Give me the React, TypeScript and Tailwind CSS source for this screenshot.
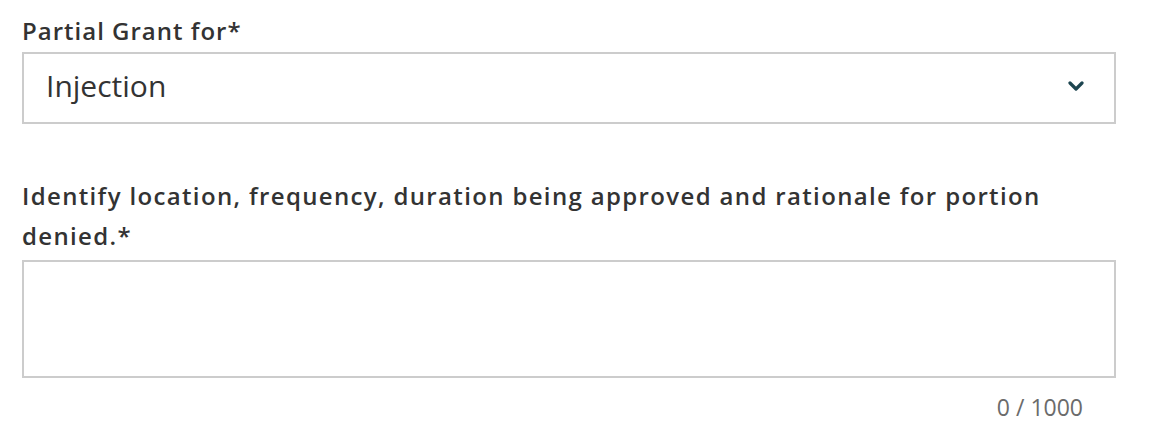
export default function App() {
  return (
    <div className="min-h-screen bg-white font-['Open_Sans','Liberation_Sans',sans-serif] text-[#333333]">
      <div className="pl-[22px] w-[1116px]">
        {/* Partial grant select */}
        <div className="mt-[11px] h-[40px] leading-[40px] text-[24px] tracking-[1px] font-semibold text-[#333333]">
          Partial Grant for*
        </div>
        <div className="mt-[1px] h-[72px] border-2 border-[#cccccc] flex items-center justify-between pl-[22px] pr-[30px] pb-[5px]">
          <span className="text-[30px] text-[#333333]">Injection</span>
          <svg width="16" height="10" viewBox="0 0 16 10" fill="none">
            <path d="M2 2l6 6 6-6" stroke="#1d4550" strokeWidth="3.2" strokeLinecap="round" strokeLinejoin="round" />
          </svg>
        </div>

        {/* Rationale textarea */}
        <div className="mt-[52px] leading-[40px] text-[24px] tracking-[1.35px] font-semibold text-[#333333] pr-[20px]">
          Identify location, frequency, duration being approved and rationale for portion denied.*
        </div>
        <div className="mt-[4px] h-[118px] border-2 border-[#cccccc]" />
        <div className="mt-[18px] h-[22px] leading-[22px] text-right pr-[33px] text-[23px] font-medium text-[#6b6b6b]">
          0 / 1000
        </div>
      </div>
    </div>
  );
}
